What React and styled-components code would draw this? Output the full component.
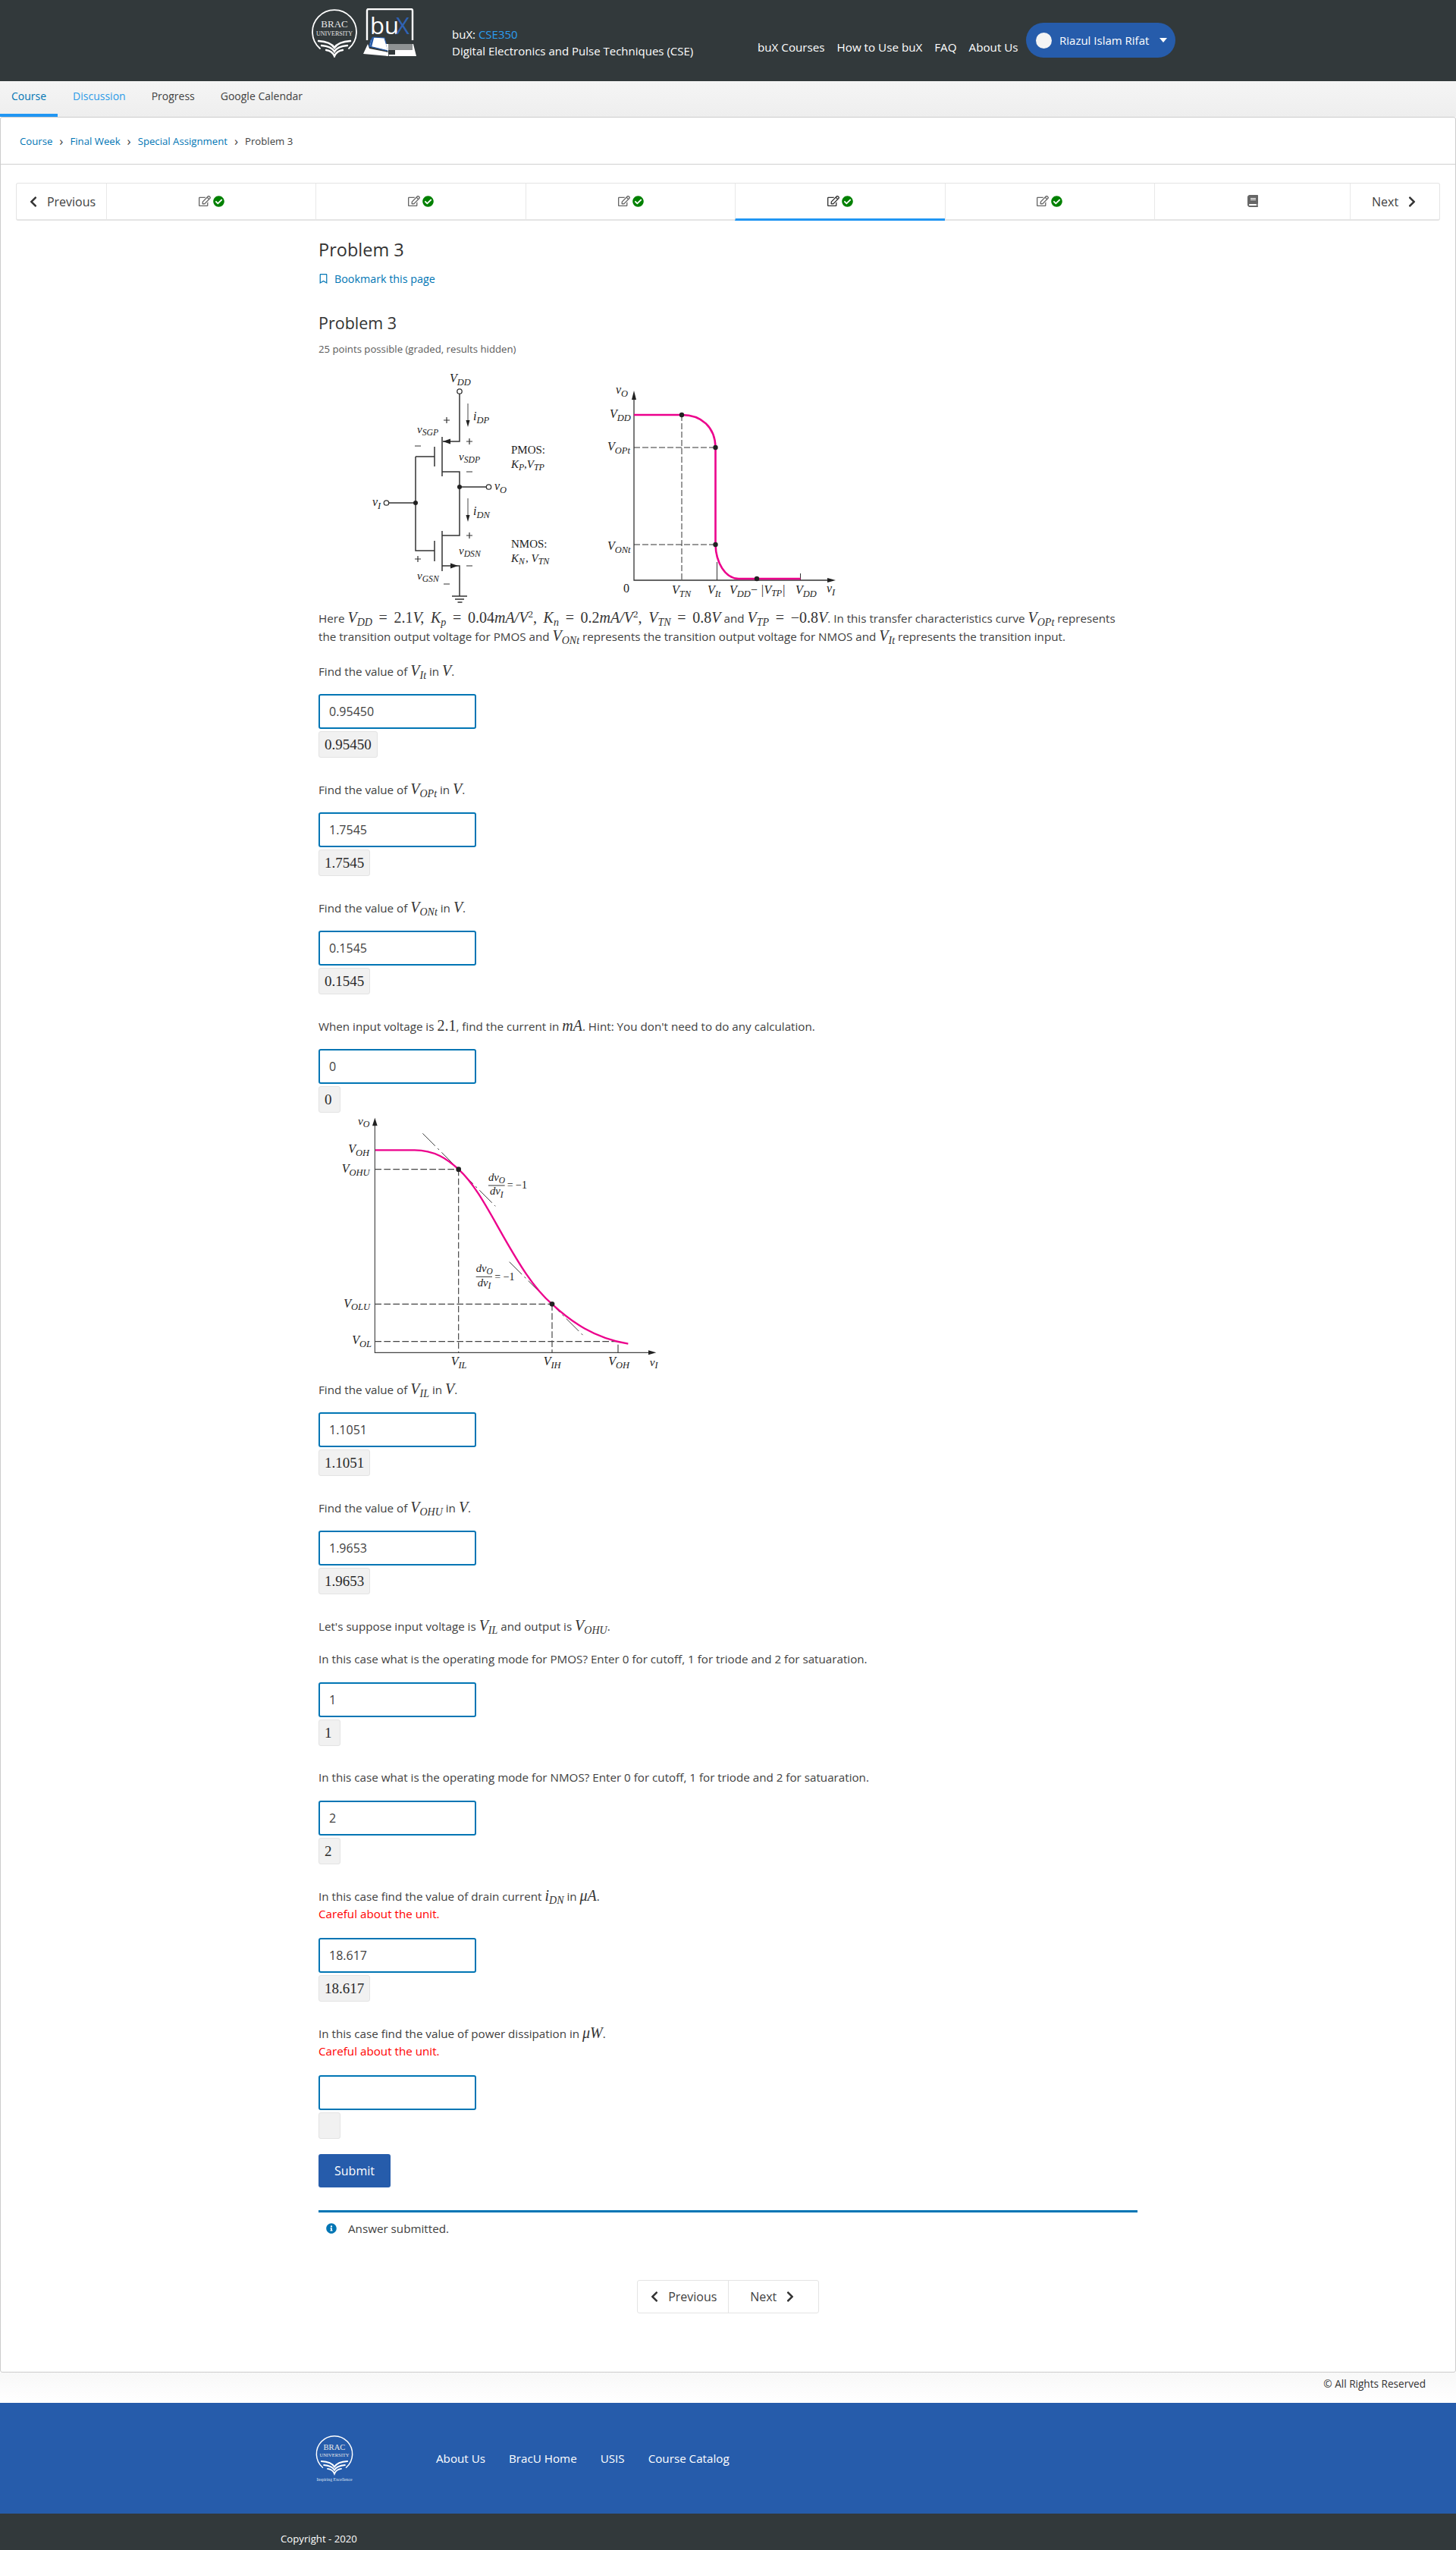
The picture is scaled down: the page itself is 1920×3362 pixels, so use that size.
import styled, { createGlobalStyle } from "styled-components";
import {
  FaBook,
  FaCheckCircle,
  FaChevronLeft,
  FaChevronRight,
  FaInfoCircle,
  FaRegBookmark,
  FaRegEdit,
} from "react-icons/fa";

const GlobalStyle = createGlobalStyle`
  * { box-sizing: border-box; }
  body {
    margin: 0;
    background: #fff;
    font-family: "Open Sans", sans-serif;
    font-size: 15.2px;
    color: #414141;
  }
`;

const SERIF = `"Liberation Serif", serif`;

/* ---------- header ---------- */
const Header = styled.header`
  display: flex;
  align-items: flex-start;
  height: 107px;
  padding: 11px 0 0 411px;
  background: #32393b;
  color: #fff;
`;

const Logos = styled.div`
  display: flex;
  gap: 8px;
  width: 185px;
`;

const CourseTitle = styled.div`
  width: 403px;
  padding-top: 23px;
  font-size: 15px;
  line-height: 22px;
  span { color: #2b9df0; }
`;

const TopNav = styled.nav`
  display: flex;
  gap: 16px;
  width: 354px;
  padding-top: 40px;
  font-size: 15.2px;
  line-height: 22px;
`;

const UserPill = styled.div`
  display: flex;
  align-items: center;
  width: 197px;
  height: 46px;
  margin-top: 19px;
  padding-left: 13px;
  border-radius: 23px;
  background: #265cab;
  font-size: 15px;
`;

const Avatar = styled.div`
  width: 21px;
  height: 21px;
  margin-right: 10px;
  border-radius: 50%;
  background: #f4f4f4;
`;

const Caret = styled.div`
  width: 0;
  height: 0;
  margin-left: 14px;
  border-left: 5px solid transparent;
  border-right: 5px solid transparent;
  border-top: 6px solid #fff;
`;

/* ---------- tabs ---------- */
const Tabs = styled.nav`
  display: flex;
  height: 47px;
  background: linear-gradient(#f5f5f5, #eeeeee);
`;

const Tab = styled.a`
  height: 47px;
  padding: 0 15px;
  margin-right: ${(p) => (p.$active ? "5px" : "4px")};
  font-size: 14px;
  line-height: 40px;
  color: ${(p) => p.$color || "#414141"};
  border-bottom: 4px solid ${(p) => (p.$active ? "#2196f3" : "transparent")};
`;

/* ---------- panel ---------- */
const Panel = styled.main`
  min-height: 2974px;
  border: 1px solid #ccc;
  border-radius: 3px;
  background: #fff;
`;

const Breadcrumbs = styled.div`
  display: flex;
  align-items: center;
  height: 62px;
  padding-left: 25px;
  border-bottom: 1px solid #d0d0d0;
  font-size: 13.2px;
  a { color: #0075b4; }
  b {
    width: 23px;
    text-align: center;
    font-size: 17px;
    font-weight: 400;
  }
`;

const SeqNav = styled.div`
  display: flex;
  width: 1878px;
  height: 50px;
  margin: 24px 0 0 20px;
  border: 1px solid #e4e4e4;
  border-bottom-width: 2px;
  border-radius: 3px;
`;

const SeqButton = styled.div`
  display: flex;
  align-items: center;
  justify-content: center;
  flex: 0 0 ${(p) => p.$w}px;
  gap: 10px;
  font-size: 16px;
  color: #414141;
  svg { font-size: 16px; color: #333; }
  border-left: ${(p) => (p.$first ? "none" : "1px solid #e8e8e8")};
`;

const SeqCell = styled.div`
  display: flex;
  align-items: center;
  justify-content: center;
  flex: ${(p) => (p.$w ? `0 0 ${p.$w}px` : "1")};
  gap: 3px;
  margin-bottom: -2px;
  border-left: 1px solid #e8e8e8;
  border-bottom: 3px solid ${(p) => (p.$active ? "#2196f3" : "transparent")};
  font-size: 16px;
  color: ${(p) => (p.$active ? "#333" : "#666")};
  svg + svg { color: #008000; font-size: 15px; }
`;

/* ---------- content ---------- */
const Content = styled.section`
  width: 1080px;
  margin-left: 419px;
`;

const PageTitle = styled.h1`
  margin: 23px 0 0;
  font-size: 23.5px;
  line-height: 30px;
  font-weight: 500;
  color: #333;
`;

const Bookmark = styled.a`
  display: flex;
  align-items: center;
  gap: 8px;
  height: 20px;
  margin-top: 13px;
  font-size: 14.3px;
  font-weight: 500;
  color: #0075b4;
  svg { font-size: 13px; }
`;

const ProblemTitle = styled.h2`
  margin: 34px 0 0;
  font-size: 21.5px;
  line-height: 30px;
  font-weight: 500;
  color: #333;
`;

const Points = styled.div`
  margin-top: 10px;
  font-size: 13.2px;
  line-height: 18px;
  color: #5a5a5a;
`;

const Figure = styled.svg`
  display: block;
  overflow: visible;
  margin-top: ${(p) => p.$top}px;
`;

const Paragraph = styled.p`
  margin: 6px 0 21px;
  line-height: 23px;
  white-space: nowrap;
`;

const Group = styled.div`
  margin-bottom: ${(p) => (p.$last ? 0 : "29px")};
`;

const Prompt = styled.div`
  height: 24px;
  margin-bottom: ${(p) => (p.$tight ? 0 : "19px")};
  line-height: 24px;
  white-space: nowrap;
`;

const Warning = styled.div`
  height: 25px;
  margin-bottom: 19px;
  line-height: 25px;
  color: #f00;
`;

const Answer = styled.input`
  display: block;
  width: 208px;
  height: 46px;
  margin-bottom: 3px;
  padding: 0 12px;
  border: 2px solid #0075b4;
  border-radius: 3px;
  font-family: "Open Sans", sans-serif;
  font-size: 16px;
  color: #414141;
  outline: none;
`;

const Echo = styled.div`
  display: inline-block;
  vertical-align: top;
  min-width: 29px;
  height: 35px;
  padding: 0 7px;
  border: 1px solid #e3e3e3;
  border-radius: 3px;
  background: #f1f1f1;
  font-family: ${SERIF};
  font-size: 19px;
  line-height: 33px;
  color: #2a2a2a;
`;

const Line = styled.div`
  height: 24px;
  margin-bottom: 20px;
  line-height: 24px;
`;

const Submit = styled.button`
  display: block;
  width: 95px;
  height: 44px;
  margin-top: 20px;
  border: none;
  border-radius: 3px;
  background: #265cab;
  font-family: "Open Sans", sans-serif;
  font-size: 16px;
  font-weight: 500;
  color: #fff;
`;

const Notice = styled.div`
  display: flex;
  align-items: center;
  margin-top: 30px;
  padding: 9px 0 0 10px;
  height: 36px;
  border-top: 3px solid #0075b4;
  line-height: 24px;
  svg { margin-right: 15px; font-size: 14px; color: #0075b4; }
`;

const PagerRow = styled.div`
  display: flex;
  width: 240px;
  height: 44px;
  margin: 56px 0 0 420px;
  border: 1px solid #e4e4e4;
  border-radius: 3px;
`;

const PagerButton = styled.div`
  display: flex;
  flex: 1;
  align-items: center;
  justify-content: center;
  gap: 10px;
  font-size: 16px;
  svg { font-size: 16px; color: #333; }
  & + & { border-left: 1px solid #e4e4e4; }
`;

/* ---------- math ---------- */
const M = styled.span`
  font-family: ${SERIF};
  font-style: italic;
  font-size: 20px;
  word-spacing: 3.7px;
  color: #333;
  sub {
    font-size: 14px;
    line-height: 0;
    vertical-align: -4px;
  }
  sup {
    font-size: 13px;
    font-style: normal;
    line-height: 0;
    vertical-align: 7px;
  }
  em { font-style: normal; }
`;

/* ---------- footer ---------- */
const Rights = styled.div`
  height: 40px;
  padding: 4px 40px 0 0;
  background: linear-gradient(#f8f8f8, #fff);
  text-align: right;
  font-size: 13.6px;
  line-height: 22px;
  color: #333;
`;

const FooterBand = styled.div`
  display: flex;
  align-items: center;
  height: 146px;
  padding-left: 410px;
  background: #265cab;
`;

const FooterLinks = styled.nav`
  display: flex;
  gap: 31px;
  margin-left: 103px;
  font-size: 15.2px;
  color: #fff;
`;

const Copyright = styled.div`
  height: 48px;
  padding: 23px 0 0 370px;
  background: #32393b;
  font-size: 13.2px;
  line-height: 20px;
  color: #fff;
`;

/* ---------- drawings ---------- */
const Label = styled.text`
  font-family: ${SERIF};
  font-style: ${(p) => (p.$plain ? "normal" : "italic")};
  font-size: ${(p) => p.$size}px;
  fill: #222;
`;

const MathLabel = ({ x, y, main, sub, size }) => (
  <Label x={x} y={y} $size={size}>
    {main}
    {sub && (
      <tspan fontSize={size * 0.78} dy={size * 0.22}>
        {sub}
      </tspan>
    )}
  </Label>
);

const BracLogo = ({ width, height, tagline }) => (
  <svg width={width} height={height} viewBox={tagline ? "-8 0 76 76" : "0 0 60 65"}>
    <g fill="none" stroke="#fff" strokeLinecap="round">
      <path d="M11 53 A29 29 0 1 1 49 53" strokeWidth="1.8" />
      <path d="M9 43 Q25 44 30 52 Q35 44 51 43" strokeWidth="2.4" />
      <path d="M13 49 Q26 50 30 57 Q34 50 47 49" strokeWidth="2.4" />
      <path d="M19 55 Q27 56 30 63 Q33 56 41 55" strokeWidth="2.4" />
    </g>
    <text x="30" y="25" textAnchor="middle" fontFamily={SERIF} fontSize="13" fill="#e8e8e8">
      BRAC
    </text>
    <text x="30" y="36" textAnchor="middle" fontFamily={SERIF} fontSize="8" fill="#e8e8e8">
      UNIVERSITY
    </text>
    {tagline && (
      <text x="30" y="75" textAnchor="middle" fontFamily={SERIF} fontSize="7" fill="#d8e0f0">
        Inspiring Excellence
      </text>
    )}
  </svg>
);

const BuxLogo = () => (
  <svg width="70" height="64" viewBox="0 0 70 64">
    <path d="M5 42 V3 Q5 1 7 1 H63 Q65 1 65 3 V42" fill="none" stroke="#fff" strokeWidth="2.4" />
    <text x="9" y="34" fontFamily="'Open Sans', sans-serif" fontSize="31" fill="#fff">
      bu
    </text>
    <text x="43" y="34" fontFamily="'Open Sans', sans-serif" fontSize="31" fill="#2f63b5">
      X
    </text>
    <path d="M10 42 L13 38 L28 39 L33 56 L8 50 Z" fill="#fff" stroke="#265cab" strokeWidth="1.2" />
    <path d="M13 38 L10 50" stroke="#265cab" strokeWidth="2.6" />
    <path d="M0 60 L6 47 L8 53 L33 58 L33 63 Z" fill="#fff" />
    <path d="M30 47 H66 L70 63 H34 Z" fill="#fff" />
    <rect x="33" y="47" width="32" height="8" fill="#32393b" opacity="0.55" />
    <rect x="33" y="55" width="9" height="6" fill="#32393b" />
  </svg>
);

const Arrow = ({ d }) => <path d={d} fill="#222" stroke="none" />;

const CircuitFigure = () => (
  <Figure $top={22} width="700" height="306" viewBox="0 0 700 306">
    <g fill="none" stroke="#333" strokeWidth="1.3">
      <circle cx="186" cy="25" r="3.2" />
      <circle cx="224.5" cy="151" r="3.2" />
      <circle cx="89.5" cy="172" r="3.2" />
      <path d="M186 28 V91 H164 M163 85 V137 M153 98 V124 M128 111 H153 M163 131 H186 V215 H163 M163 209 V262" strokeWidth="1.5" />
      <path d="M186 151 H221 M93 172 H128 M128 111 V235 H153 M153 222 V249 M163 255 H186 V295" strokeWidth="1.5" />
      <path d="M197 41 V68 M197 166 V193" strokeWidth="0.9" />
      <path d="M176 295 H196 M180 299 H192 M183.5 303 H189.5" strokeWidth="1.6" />
      <path d="M165 63 H173 M169 59 V67 M195 91 H203 M199 87 V95 M195 215 H203 M199 211 V219 M127 246 H135 M131 242 V250" strokeWidth="1.2" />
      <path d="M127 97 H135 M195 131 H203 M195 255 H203 M165 279 H173" strokeWidth="1.2" />
    </g>
    <Arrow d="M197 72 L194.5 63 L199.5 63 Z" />
    <Arrow d="M197 197 L194.5 188 L199.5 188 Z" />
    <Arrow d="M164 91 L174 87.5 L174 94.5 Z" />
    <Arrow d="M184 255 L174 251.5 L174 258.5 Z" />
    <g fill="#222">
      <circle cx="186" cy="151" r="3" />
      <circle cx="128" cy="172" r="3" />
    </g>
    <MathLabel x={173} y={13} main="V" sub="DD" size={16} />
    <MathLabel x={204} y={63} main="i" sub="DP" size={16} />
    <MathLabel x={130} y={80} main="v" sub="SGP" size={15} />
    <MathLabel x={185} y={116} main="v" sub="SDP" size={15} />
    <MathLabel x={232} y={155} main="v" sub="O" size={16} />
    <MathLabel x={71} y={176} main="v" sub="I" size={16} />
    <MathLabel x={204} y={188} main="i" sub="DN" size={16} />
    <MathLabel x={185} y={240} main="v" sub="DSN" size={15} />
    <MathLabel x={130} y={273} main="v" sub="GSN" size={15} />
    <Label x={254} y={107} $size={15} $plain>PMOS:</Label>
    <MathLabel x={254} y={126} main="K" sub="P" size={15} />
    <Label x={271} y={126} $size={15}>,V<tspan fontSize="12" dy="3">TP</tspan></Label>
    <Label x={254} y={231} $size={15} $plain>NMOS:</Label>
    <MathLabel x={254} y={250} main="K" sub="N" size={15} />
    <Label x={273} y={250} $size={15}>, V<tspan fontSize="12" dy="3">TN</tspan></Label>

    <g fill="none" stroke="#333" strokeWidth="1.3">
      <path d="M416 30 V274 H676" />
      <path d="M525.5 250 V274 M635.5 265 V274" strokeWidth="1" />
      <path d="M416 99 H523 M416 227 H523 M479 56 V274" strokeDasharray="8 3" strokeWidth="1" />
    </g>
    <Arrow d="M416 24 L413 36 L419 36 Z" />
    <Arrow d="M682 274 L671 271 L671 277 Z" />
    <path
      d="M416 56 H479 C505 56 523 72 523.5 99 V227 C524 250 536 272 554 272 H635.5"
      fill="none"
      stroke="#ec008c"
      strokeWidth="2.6"
    />
    <g fill="#222">
      <circle cx="479" cy="56" r="3.2" />
      <circle cx="523.5" cy="99" r="3.2" />
      <circle cx="523.5" cy="227" r="3.2" />
      <circle cx="578" cy="272" r="3.2" />
    </g>
    <MathLabel x={392} y={28} main="v" sub="O" size={16} />
    <MathLabel x={384} y={60} main="V" sub="DD" size={16} />
    <MathLabel x={381} y={103} main="V" sub="OPt" size={16} />
    <MathLabel x={381} y={234} main="V" sub="ONt" size={16} />
    <Label x={402} y={290} $size={16} $plain>0</Label>
    <MathLabel x={466} y={292} main="V" sub="TN" size={16} />
    <MathLabel x={513} y={292} main="V" sub="It" size={16} />
    <MathLabel x={542} y={292} main="V" sub="DD" size={16} />
    <Label x={570} y={292} $size={16} $plain>−</Label>
    <Label x={583} y={292} $size={16}>|V<tspan fontSize="12" dy="3">TP</tspan><tspan dy="-3">|</tspan></Label>
    <MathLabel x={629} y={292} main="V" sub="DD" size={16} />
    <MathLabel x={670} y={290} main="v" sub="I" size={16} />
  </Figure>
);

const VtcFigure = () => (
  <Figure $top={2} width="450" height="350" viewBox="60 84 1350 1050">
    <g fill="none" stroke="#444" strokeWidth="3.5">
      <path d="M283 115 V1027 H1380" />
      <path d="M1245 995 V1027" />
      <path d="M283 302 H614 M283 835 H984 M283 983 H1240 M614 302 V1027 M984 835 V1027" strokeDasharray="26 10" />
      <path d="M472 160 L760 448 M815 668 L1110 962" strokeDasharray="70 14 8 14" strokeWidth="3" />
    </g>
    <Arrow d="M283 98 L273 130 L293 130 Z" />
    <Arrow d="M1396 1027 L1365 1018 L1365 1036 Z" />
    <path
      d="M285 226 H440 C520 226 570 262 614 302 C680 362 730 460 790 565 C850 670 910 772 984 835 C1060 905 1150 970 1285 992"
      fill="none"
      stroke="#ec008c"
      strokeWidth="7"
    />
    <g fill="#222">
      <circle cx="614" cy="302" r="10" />
      <circle cx="984" cy="835" r="10" />
    </g>
    <MathLabel x={216} y={126} main="v" sub="O" size={46} />
    <MathLabel x={178} y={238} main="V" sub="OH" size={48} />
    <MathLabel x={152} y={315} main="V" sub="OHU" size={48} />
    <MathLabel x={160} y={848} main="V" sub="OLU" size={48} />
    <MathLabel x={193} y={993} main="V" sub="OL" size={48} />
    <MathLabel x={584} y={1078} main="V" sub="IL" size={48} />
    <MathLabel x={950} y={1078} main="V" sub="IH" size={48} />
    <MathLabel x={1207} y={1078} main="V" sub="OH" size={48} />
    <MathLabel x={1370} y={1080} main="v" sub="I" size={46} />

    <MathLabel x={732} y={347} main="dv" sub="O" size={44} />
    <path d="M732 366 H797" stroke="#333" strokeWidth="3" />
    <MathLabel x={738} y={403} main="dv" sub="I" size={44} />
    <Label x={806} y={378} $size={42} $plain>= −1</Label>
    <MathLabel x={683} y={708} main="dv" sub="O" size={44} />
    <path d="M683 727 H747" stroke="#333" strokeWidth="3" />
    <MathLabel x={689} y={764} main="dv" sub="I" size={44} />
    <Label x={757} y={740} $size={42} $plain>= −1</Label>
  </Figure>
);

const Question = ({ label, value, warn }) => (
  <Group>
    <Prompt $tight={warn}>{label}</Prompt>
    {warn && <Warning>Careful about the unit.</Warning>}
    <Answer readOnly value={value} />
    <Echo>{value}</Echo>
  </Group>
);

const findValue = (sub) => (
  <>
    Find the value of <M>V<sub>{sub}</sub></M> in <M>V</M>.
  </>
);

const Edit = () => (
  <>
    <FaRegEdit />
    <FaCheckCircle />
  </>
);

export default function App() {
  return (
    <>
      <GlobalStyle />
      <Header>
        <Logos>
          <BracLogo width="60" height="65" />
          <BuxLogo />
        </Logos>
        <CourseTitle>
          buX: <span>CSE350</span>
          <br />
          Digital Electronics and Pulse Techniques (CSE)
        </CourseTitle>
        <TopNav>
          <a>buX Courses</a>
          <a>How to Use buX</a>
          <a>FAQ</a>
          <a>About Us</a>
        </TopNav>
        <UserPill>
          <Avatar />
          Riazul Islam Rifat
          <Caret />
        </UserPill>
      </Header>

      <Tabs>
        <Tab $active $color="#0075b4">Course</Tab>
        <Tab $color="#2b9be8">Discussion</Tab>
        <Tab>Progress</Tab>
        <Tab>Google Calendar</Tab>
      </Tabs>

      <Panel>
        <Breadcrumbs>
          <a>Course</a>
          <b>›</b>
          <a>Final Week</a>
          <b>›</b>
          <a>Special Assignment</a>
          <b>›</b>
          Problem 3
        </Breadcrumbs>

        <SeqNav>
          <SeqButton $w={118} $first>
            <FaChevronLeft />
            Previous
          </SeqButton>
          <SeqCell><Edit /></SeqCell>
          <SeqCell><Edit /></SeqCell>
          <SeqCell><Edit /></SeqCell>
          <SeqCell $active><Edit /></SeqCell>
          <SeqCell><Edit /></SeqCell>
          <SeqCell $w={258}><FaBook /></SeqCell>
          <SeqButton $w={118}>
            Next
            <FaChevronRight />
          </SeqButton>
        </SeqNav>

        <Content>
          <PageTitle>Problem 3</PageTitle>
          <Bookmark>
            <FaRegBookmark />
            Bookmark this page
          </Bookmark>
          <ProblemTitle>Problem 3</ProblemTitle>
          <Points>25 points possible (graded, results hidden)</Points>
          <CircuitFigure />
          <Paragraph>
            Here <M>V<sub>DD</sub> <em>= 2.1</em>V, K<sub>p</sub> <em>= 0.04</em>mA/V<sup>2</sup>, K<sub>n</sub> <em>= 0.2</em>mA/V<sup>2</sup>, V<sub>TN</sub> <em>= 0.8</em>V</M> and{" "}
            <M>V<sub>TP</sub> <em>= −0.8</em>V</M>. In this transfer characteristics curve <M>V<sub>OPt</sub></M> represents
            <br />
            the transition output voltage for PMOS and <M>V<sub>ONt</sub></M> represents the transition output voltage for NMOS and{" "}
            <M>V<sub>It</sub></M> represents the transition input.
          </Paragraph>

          <Question label={findValue("It")} value="0.95450" />
          <Question label={findValue("OPt")} value="1.7545" />
          <Question label={findValue("ONt")} value="0.1545" />
          <Group $last>
            <Prompt>
              When input voltage is <M><em>2.1</em></M>, find the current in <M>mA</M>. Hint: You don't need to do any calculation.
            </Prompt>
            <Answer readOnly value="0" />
            <Echo>0</Echo>
          </Group>

          <VtcFigure />

          <Question label={findValue("IL")} value="1.1051" />
          <Question label={findValue("OHU")} value="1.9653" />
          <Line>
            Let's suppose input voltage is <M>V<sub>IL</sub></M> and output is <M>V<sub>OHU</sub></M>.
          </Line>
          <Question label="In this case what is the operating mode for PMOS? Enter 0 for cutoff, 1 for triode and 2 for satuaration." value="1" />
          <Question label="In this case what is the operating mode for NMOS? Enter 0 for cutoff, 1 for triode and 2 for satuaration." value="2" />
          <Question
            warn
            label={
              <>
                In this case find the value of drain current <M>i<sub>DN</sub></M> in <M>μA</M>.
              </>
            }
            value="18.617"
          />
          <Group $last>
            <Prompt $tight>
              In this case find the value of power dissipation in <M>μW</M>.
            </Prompt>
            <Warning>Careful about the unit.</Warning>
            <Answer readOnly value="" />
            <Echo />
          </Group>

          <Submit>Submit</Submit>
          <Notice>
            <FaInfoCircle />
            Answer submitted.
          </Notice>
          <PagerRow>
            <PagerButton>
              <FaChevronLeft />
              Previous
            </PagerButton>
            <PagerButton>
              Next
              <FaChevronRight />
            </PagerButton>
          </PagerRow>
        </Content>
      </Panel>

      <Rights>© All Rights Reserved</Rights>
      <FooterBand>
        <BracLogo width="62" height="62" tagline />
        <FooterLinks>
          <a>About Us</a>
          <a>BracU Home</a>
          <a>USIS</a>
          <a>Course Catalog</a>
        </FooterLinks>
      </FooterBand>
      <Copyright>Copyright - 2020</Copyright>
    </>
  );
}
